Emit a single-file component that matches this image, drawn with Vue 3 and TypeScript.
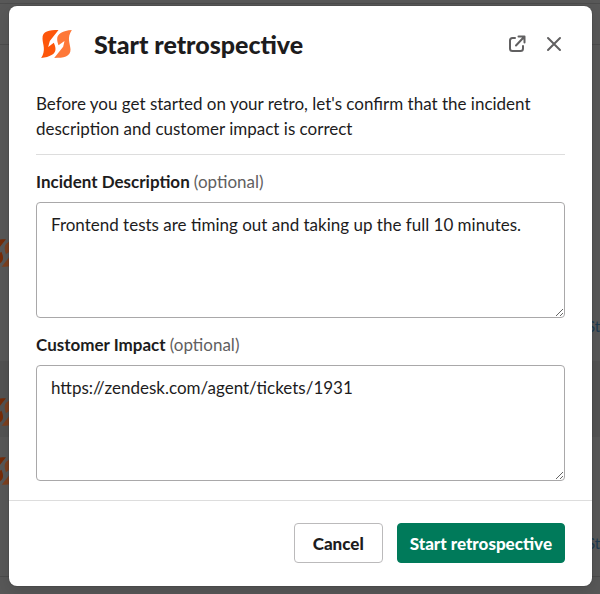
<script setup lang="ts">
import { ref } from 'vue'

const description = ref('Frontend tests are timing out and taking up the full 10 minutes.')
const impact = ref('https://zendesk.com/agent/tickets/1931')
const leftMarks = [238, 397, 456]
const rightLinks = [316, 533]
</script>

<template>
  <main class="screen">
    <div class="backdrop" aria-hidden="true">
      <div class="band band-top"></div>
      <div class="band band-a"></div>
      <div class="band band-b"></div>
      <div class="band band-c"></div>
      <svg v-for="y in leftMarks" :key="y" class="mark" :style="{ top: y + 'px' }" viewBox="0 0 92 90">
        <path fill="#772c08" d="M52 3C24 3 3 6 4 29C5 49 15 62 0 87C26 84 43 76 43 60C43 53 41 48 38 41L21 54L26 36Z" />
        <path fill="#7c4020" d="M39 87C67 87 89 84 88 61C87 41 76 28 92 3C65 5 48 14 48 30C48 37 50 42 52 49L70 36L66 53Z" />
      </svg>
      <span v-for="y in rightLinks" :key="y" class="link" :style="{ top: y + 'px' }">St</span>
      <p class="peek">It looks like this at 8:42</p>
    </div>

    <form class="modal" role="dialog" aria-labelledby="modal-title" @submit.prevent>
      <header class="head">
        <svg class="logo" viewBox="0 0 92 90" aria-hidden="true">
          <path fill="#fd560a" d="M52 3C24 3 3 6 4 29C5 49 15 62 0 87C26 84 43 76 43 60C43 53 41 48 38 41L21 54L26 36Z" />
          <path fill="#fe7838" d="M39 87C67 87 89 84 88 61C87 41 76 28 92 3C65 5 48 14 48 30C48 37 50 42 52 49L70 36L66 53Z" />
        </svg>
        <h1 id="modal-title">Start retrospective</h1>
        <button type="button" class="icon" aria-label="Open in new window">
          <svg viewBox="0 0 20 20"><path d="M8 4H5.500Q3 4 3 6.500V14.500Q3 17 5.500 17H13.500Q16 17 16 14.500V12M9 11.500L17 3M11.500 2.500H17.500V8.500" /></svg>
        </button>
        <button type="button" class="icon" aria-label="Close">
          <svg viewBox="0 0 20 20"><path d="M4 4L16 16M16 4L4 16" /></svg>
        </button>
      </header>

      <div class="body">
        <p class="intro">Before you get started on your retro, let's confirm that the incident description and customer impact is correct</p>
        <hr />
        <div class="field">
          <label for="description">Incident Description <span>(optional)</span></label>
          <textarea id="description" v-model="description" spellcheck="false"></textarea>
        </div>
        <div class="field">
          <label for="impact">Customer Impact <span>(optional)</span></label>
          <textarea id="impact" v-model="impact" spellcheck="false"></textarea>
        </div>
      </div>

      <footer class="foot">
        <button type="button" class="btn">Cancel</button>
        <button type="submit" class="btn primary">Start retrospective</button>
      </footer>
    </form>
  </main>
</template>

<style>
body {
  margin: 0;
}
</style>

<style scoped>
.screen {
  position: relative;
  box-sizing: border-box;
  min-height: 100vh;
  padding: 6px 8px 8px 9px;
  overflow: hidden;
  background: #585858;
  color: #1d1c1d;
  font-family: Lato, "Liberation Sans", sans-serif;
  font-size: 17px;
  line-height: 25px;
}
.backdrop {
  position: absolute;
  inset: 0;
  overflow: hidden;
}
.band {
  position: absolute;
  left: 0;
  right: 0;
  border-bottom: 1px solid #4c4c4c;
}
.band-top {
  top: 0;
  height: 3px;
}
.band-a {
  top: 4px;
  height: 40px;
}
.band-b {
  top: 361px;
  height: 76px;
  background: #535353;
  border: 0;
}
.band-c {
  top: 438px;
  height: 138px;
}
.mark {
  position: absolute;
  left: -11px;
  width: 30px;
  height: 30px;
}
.link {
  position: absolute;
  left: calc(100% - 13px);
  color: #1c3a50;
  font-size: 15px;
  line-height: 20px;
}
.peek {
  position: absolute;
  top: 588px;
  left: 0;
  margin: 0;
  color: #2c262c;
  font-weight: 700;
}
.modal {
  position: relative;
  border-radius: 8px;
  background: #fff;
  box-shadow: 0 0 0 1px rgba(29, 28, 29, 0.13), 0 6px 16px rgba(0, 0, 0, 0.12);
}
.head {
  display: flex;
  align-items: center;
  gap: 1px;
  padding: 20px 20px 17px 32px;
}
.logo {
  width: 31px;
  height: 30px;
}
h1 {
  flex: 1;
  margin: 0 0 0 21px;
  font-size: 25px;
  font-weight: 900;
  line-height: 36px;
}
.icon {
  display: flex;
  align-items: center;
  justify-content: center;
  width: 36px;
  height: 36px;
  padding: 0;
  border: 0;
  border-radius: 4px;
  background: none;
}
.icon svg {
  width: 20px;
  height: 20px;
  fill: none;
  stroke: #616061;
  stroke-width: 2;
  stroke-linecap: round;
  stroke-linejoin: round;
}
.body {
  padding: 12px 27px 19px;
}
.intro {
  margin: 0 0 13px;
}
hr {
  height: 1px;
  margin: 0;
  border: 0;
  background: #dddddd;
}
.field {
  padding-top: 14px;
}
label {
  display: block;
  margin-bottom: 8px;
  font-weight: 700;
}
label span {
  color: #616061;
  font-weight: 400;
}
textarea {
  display: block;
  box-sizing: border-box;
  width: 100%;
  height: 116px;
  padding: 9px 14px;
  border: 1px solid #a9a8a9;
  border-radius: 4px;
  background: #fff;
  color: inherit;
  font: inherit;
  outline: 0;
  resize: vertical;
}
.foot {
  display: flex;
  justify-content: flex-end;
  gap: 14px;
  padding: 22px 27px 23px;
  border-top: 1px solid #dddddd;
}
.btn {
  height: 40px;
  padding: 0 18px;
  border: 1px solid #bbbabb;
  border-radius: 4px;
  background: #fff;
  color: inherit;
  font: inherit;
  font-weight: 900;
}
.primary {
  padding: 0 12px;
  border-color: #007a5a;
  background: #007a5a;
  color: #fff;
}
</style>
